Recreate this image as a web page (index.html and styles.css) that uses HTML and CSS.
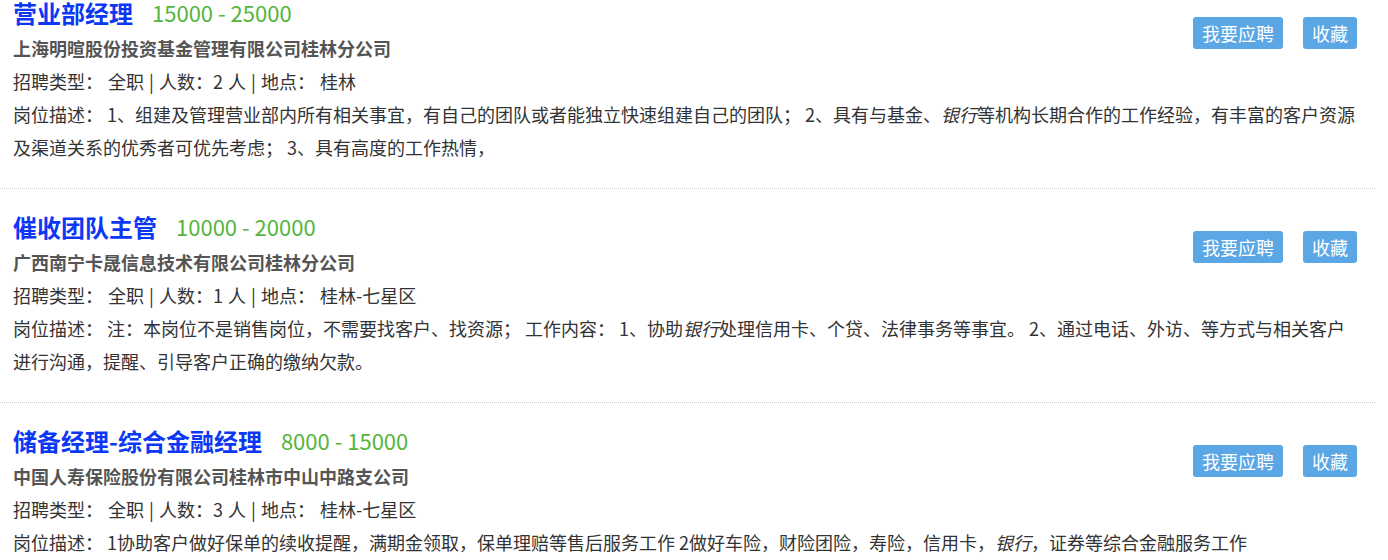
FILE: index.html
```html
<!DOCTYPE html>
<html lang="zh-CN">
<head>
    <meta charset="UTF-8">
    <meta name="viewport" content="width=device-width, initial-scale=1.0">
    <title>招聘职位</title>
    <link rel="stylesheet" href="styles.css">
</head>
<body>
    <div class="job-list">
        <div class="job-item">
            <div class="job-head">
                <div class="job-main">
                    <div class="job-title">
                        <a href="#" class="job-name">营业部经理</a>
                        <span class="job-salary">15000 - 25000</span>
                    </div>
                    <div class="job-company">上海明暄股份投资基金管理有限公司桂林分公司</div>
                </div>
                <div class="job-actions">
                    <button class="btn">我要应聘</button>
                    <button class="btn">收藏</button>
                </div>
            </div>
            <div class="job-info">招聘类型： 全职 | 人数：2 人 | 地点： 桂林</div>
            <div class="job-desc">岗位描述： 1、组建及管理营业部内所有相关事宜，有自己的团队或者能独立快速组建自己的团队； 2、具有与基金、<em>银行</em>等机构长期合作的工作经验，有丰富的客户资源及渠道关系的优秀者可优先考虑； 3、具有高度的工作热情，</div>
        </div>

        <div class="job-item">
            <div class="job-head">
                <div class="job-main">
                    <div class="job-title">
                        <a href="#" class="job-name">催收团队主管</a>
                        <span class="job-salary">10000 - 20000</span>
                    </div>
                    <div class="job-company">广西南宁卡晟信息技术有限公司桂林分公司</div>
                </div>
                <div class="job-actions">
                    <button class="btn">我要应聘</button>
                    <button class="btn">收藏</button>
                </div>
            </div>
            <div class="job-info">招聘类型： 全职 | 人数：1 人 | 地点： 桂林-七星区</div>
            <div class="job-desc">岗位描述： 注：本岗位不是销售岗位，不需要找客户、找资源； 工作内容： 1、协助<em>银行</em>处理信用卡、个贷、法律事务等事宜。 2、通过电话、外访、等方式与相关客户进行沟通，提醒、引导客户正确的缴纳欠款。</div>
        </div>

        <div class="job-item">
            <div class="job-head">
                <div class="job-main">
                    <div class="job-title">
                        <a href="#" class="job-name">储备经理-综合金融经理</a>
                        <span class="job-salary">8000 - 15000</span>
                    </div>
                    <div class="job-company">中国人寿保险股份有限公司桂林市中山中路支公司</div>
                </div>
                <div class="job-actions">
                    <button class="btn">我要应聘</button>
                    <button class="btn">收藏</button>
                </div>
            </div>
            <div class="job-info">招聘类型： 全职 | 人数：3 人 | 地点： 桂林-七星区</div>
            <div class="job-desc">岗位描述： 1协助客户做好保单的续收提醒，满期金领取，保单理赔等售后服务工作 2做好车险，财险团险，寿险，信用卡，<em>银行</em>，证券等综合金融服务工作</div>
        </div>
    </div>
</body>
</html>
```

FILE: styles.css
```css
body {
    margin: 0;
    background-color: #fff;
    font-family: "Noto Sans CJK SC", "Noto Sans", sans-serif;
    color: #333;
    overflow: hidden;
}

.job-list {
    width: 1375px;
    margin-top: -25px; /* 列表已向下滚动一点 */
}

.job-item {
    padding: 18px 15px 24px 13px;
    border-bottom: 1px dotted #ccc;
}

.job-head {
    display: flex;
    justify-content: space-between;
    align-items: flex-start;
}

.job-title {
    display: flex;
    align-items: center;
    height: 39px;
}

.job-name {
    font-size: 24px;
    font-weight: bold;
    line-height: 39px;
    color: #0c38f5;
    text-decoration: none;
}

.job-salary {
    margin-left: 19px;
    font-size: 22px;
    line-height: 39px;
    color: #55b63c;
}

.job-company {
    font-size: 18px;
    font-weight: bold;
    color: #555;
    line-height: 33px;
}

.job-actions {
    display: flex;
    gap: 20px;
    margin-top: 24px;
    margin-right: 3px;
}

.btn {
    padding: 4px 9px;
    font-family: inherit;
    font-size: 18px;
    line-height: 24px;
    color: #fff;
    background-color: #5ba6e4;
    border: none;
    border-radius: 3px;
    cursor: pointer;
}

.job-info,
.job-desc {
    font-size: 18px;
    line-height: 33px;
}

.job-info {
    word-spacing: 1px;
}
```
